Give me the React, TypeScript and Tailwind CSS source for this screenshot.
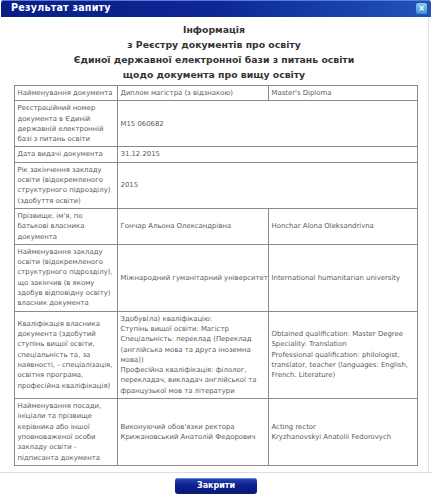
import React from 'react';

const rows: { label: string[]; ua: string[]; en?: string[]; span?: boolean }[] = [
  { label: ['Найменування документа'], ua: ['Диплом магістра (з відзнакою)'], en: ["Master's Diploma"] },
  {
    label: ['Реєстраційний номер', 'документа в Єдиній', 'державній електронній', 'базі з питань освіти'],
    ua: ['M15 060682'],
    span: true,
  },
  { label: ['Дата видачі документа'], ua: ['31.12.2015'], span: true },
  {
    label: ['Рік закінчення закладу', 'освіти (відокремленого', 'структурного підрозділу)', '(здобуття освіти)'],
    ua: ['2015'],
    span: true,
  },
  {
    label: ["Прізвище, ім'я, по", 'батькові власника', 'документа'],
    ua: ['Гончар Альона Олександрівна'],
    en: ['Honchar Alona Oleksandrivna'],
  },
  {
    label: [
      'Найменування закладу',
      'освіти (відокремленого',
      'структурного підрозділу),',
      'що закінчив (в якому',
      'здобув відповідну освіту)',
      'власник документа',
    ],
    ua: ['Міжнародний гуманітарний університет'],
    en: ['International humanitarian university'],
  },
  {
    label: [
      'Кваліфікація власника',
      'документа (здобутий',
      'ступінь вищої освіти,',
      'спеціальність та, за',
      'наявності, - спеціалізація,',
      'освітня програма,',
      'професійна кваліфікація)',
    ],
    ua: [
      'Здобув(ла) кваліфікацію:',
      'Ступінь вищої освіти: Магістр',
      'Спеціальність: переклад (Переклад',
      '(англійська мова та друга іноземна',
      'мова))',
      'Професійна кваліфікація: філолог,',
      'перекладач, викладач англійської та',
      'французької мов та літератури',
    ],
    en: [
      'Obtained qualification: Master Degree',
      'Speciality: Translation',
      'Professional qualification: philologist,',
      'translator, teacher (languages: English,',
      'French. Literature)',
    ],
  },
  {
    label: [
      'Найменування посади,',
      'ініціали та прізвище',
      'керівника або іншої',
      'уповноваженої особи',
      'закладу освіти -',
      'підписанта документа',
    ],
    ua: ["Виконуючий обов'язки ректора", 'Крижановський Анатолій Федорович'],
    en: ['Acting rector', 'Kryzhanovskyi Anatolii Fedorovych'],
  },
];

function Lines({ lines }: { lines: string[] }) {
  return (
    <>
      {lines.map((l, i) => (
        <div key={i} className="whitespace-nowrap">
          {l}
        </div>
      ))}
    </>
  );
}

export default function App() {
  return (
    <div className="w-[432px] h-[500px] bg-white flex flex-col font-['DejaVu_Sans',_Verdana,_sans-serif] overflow-hidden">
      {/* Заголовок вікна */}
      <div className="h-[17px] mx-[1px] rounded-t-[3px] bg-gradient-to-r from-[#0a1d86] via-[#0d2794] to-[#2253b8] flex items-center justify-between pl-[10px] pr-[4px] shadow-[inset_0_1px_0_#5a7fd0]">
        <span className="text-white font-bold text-[9.6px] tracking-[0.2px]">Результат запиту</span>
        <span className="w-[11px] h-[11px] rounded-[2px] bg-gradient-to-b from-[#8cc8f0] to-[#3f8fd6] flex items-center justify-center text-white text-[8px] font-bold leading-none">
          ×
        </span>
      </div>

      <div className="flex-1 flex flex-col border-r border-[#e4e4e4] mr-[3px]">
        <div className="pt-[5px] text-center text-[#333] font-bold text-[9.3px] leading-[15px]">
          <div>Інформація</div>
          <div>з Реєстру документів про освіту</div>
          <div>Єдиної державної електронної бази з питань освіти</div>
          <div>щодо документа про вищу освіту</div>
        </div>

        <table className="mt-[3px] ml-[14px] border-collapse text-[6.9px] leading-[10.3px] text-[#5a5a5a] w-[403px] table-fixed">
          <colgroup>
            <col className="w-[103px]" />
            <col className="w-[151px]" />
            <col className="w-[149px]" />
          </colgroup>
          <tbody>
            {rows.map((r, i) => (
              <tr key={i}>
                <td className="border border-[#8a8a8a] px-[2.5px] py-[2px] align-middle">
                  <Lines lines={r.label} />
                </td>
                <td
                  colSpan={r.span ? 2 : 1}
                  className="border border-[#8a8a8a] px-[2.5px] py-[2px] align-middle"
                >
                  <Lines lines={r.ua} />
                </td>
                {!r.span && (
                  <td className="border border-[#8a8a8a] px-[2.5px] py-[2px] align-middle">
                    <Lines lines={r.en ?? []} />
                  </td>
                )}
              </tr>
            ))}
          </tbody>
        </table>

        <div className="flex-1" />
      </div>

      <div className="border-t border-[#dcdcdc] h-[28px] flex items-start justify-center pt-[5px]">
        <button className="w-[82px] h-[16px] rounded-[3px] bg-gradient-to-b from-[#2a45b8] via-[#0c1f8a] to-[#0a1a78] text-white font-bold text-[8px] flex items-center justify-center shadow-[inset_0_1px_0_#6f8ae0]">
          Закрити
        </button>
      </div>
    </div>
  );
}
